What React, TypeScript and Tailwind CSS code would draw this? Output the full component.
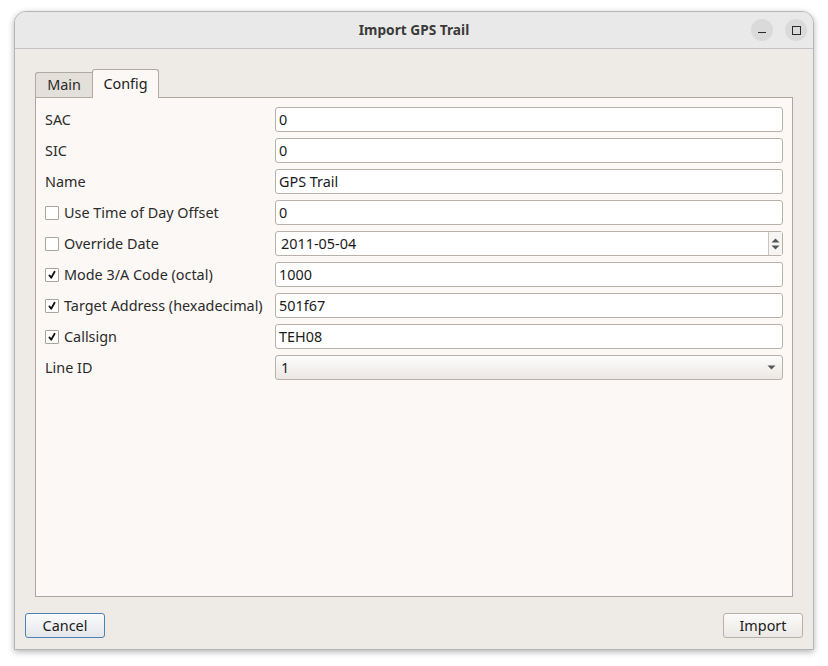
import React from "react";

const font = { fontFamily: '"Noto Sans", "Open Sans", sans-serif' };

function CheckBox({ checked }: { checked: boolean }) {
  return (
    <span className="w-[14px] h-[14px] border border-[#a9a49d] bg-white rounded-[1px] flex items-center justify-center shrink-0">
      {checked && (
        <svg width="10" height="10" viewBox="0 0 10 10">
          <path d="M2.4 5.4 L4.2 7.8 L7.6 1.8" stroke="#111" strokeWidth="1.8" fill="none" strokeLinecap="round" strokeLinejoin="round" />
        </svg>
      )}
    </span>
  );
}

function TextField({ value }: { value: string }) {
  return (
    <div className="h-[25px] border border-[#b7b1a9] rounded-[3px] bg-white flex items-center pl-[3px] text-[14.4px] text-[#1b1b1b]">
      {value}
    </div>
  );
}

function SpinField({ value }: { value: string }) {
  return (
    <div className="h-[25px] border border-[#b7b1a9] rounded-[3px] bg-white flex items-center text-[14.4px] text-[#1b1b1b]">
      <div className="flex-1 pl-[5px]">{value}</div>
      <div className="w-[14px] h-full border-l border-[#c9c4bd] bg-[#f6f5f3] flex flex-col items-center justify-center gap-[2px]">
        <svg width="9" height="5" viewBox="0 0 9 5"><path d="M0.5 4.5 L4.5 0.5 L8.5 4.5 Z" fill="#555" /></svg>
        <svg width="9" height="5" viewBox="0 0 9 5"><path d="M0.5 0.5 L4.5 4.5 L8.5 0.5 Z" fill="#555" /></svg>
      </div>
    </div>
  );
}

function ComboField({ value }: { value: string }) {
  return (
    <div className="h-[25px] border border-[#b7b1a9] rounded-[3px] bg-gradient-to-b from-[#fdfcfb] to-[#ebe8e4] flex items-center text-[14.4px] text-[#1b1b1b]">
      <div className="flex-1 pl-[5px]">{value}</div>
      <div className="w-[22px] flex items-center justify-center">
        <svg width="9" height="5" viewBox="0 0 9 5"><path d="M0.5 0.5 L4.5 4.5 L8.5 0.5 Z" fill="#555" /></svg>
      </div>
    </div>
  );
}

function Label({ text, check }: { text: string; check?: boolean | null }) {
  return (
    <div className="h-[25px] flex items-center gap-[5px] text-[14.4px] text-[#2b2b2b] whitespace-nowrap">
      {check !== undefined && check !== null && <CheckBox checked={check} />}
      <span>{text}</span>
    </div>
  );
}

export default function App() {
  return (
    <div className="w-[828px] h-[666px] bg-white pt-[11px] pl-[14px]" style={font}>
      <div className="w-[800px] h-[639px] rounded-t-[12px] border border-[#b5b5b5] bg-[#eeebe7] flex flex-col overflow-hidden shadow-[0_2px_6px_rgba(0,0,0,0.3)]">
        <div className="h-[37px] shrink-0 bg-[#e9e9e9] border-b border-[#c4c4c4] relative flex items-center justify-center">
          <span className="text-[13.7px] font-bold text-[#3a3a3a]">Import GPS Trail</span>
          <div className="absolute right-[6px] top-[7px] flex gap-[12px]">
            <div className="w-[22px] h-[22px] rounded-full bg-[#dadada] flex items-center justify-center">
              <div className="w-[8px] h-[1.5px] bg-[#2a2a2a] mt-[5px]" />
            </div>
            <div className="w-[22px] h-[22px] rounded-full bg-[#dadada] flex items-center justify-center">
              <div className="w-[9px] h-[9px] border-[1.5px] border-[#2a2a2a]" />
            </div>
          </div>
        </div>
        <div className="flex-1 flex flex-col px-[20px] pt-[20px]">
          <div className="h-[28px] flex items-end relative z-10">
            <div className="h-[26px] w-[57px] border border-[#b0aaa2] border-r-0 rounded-tl-[3px] bg-[#e3dfd9] flex items-center justify-center text-[14.4px] text-[#2b2b2b] mb-[-1px]">
              Main
            </div>
            <div className="h-[29px] w-[67px] border border-[#b0aaa2] border-b-0 rounded-t-[3px] bg-[#fbf8f5] flex items-center justify-center text-[14.4px] text-[#1b1b1b] mb-[-1px] pb-[1px]">
              Config
            </div>
          </div>
          <div className="h-[500px] border border-[#aca69e] bg-[#fbf8f5] px-[9px] pt-[9px]">
            <div className="grid grid-cols-[230px_1fr] gap-y-[6px]">
              <Label text="SAC" />
              <TextField value="0" />
              <Label text="SIC" />
              <TextField value="0" />
              <Label text="Name" />
              <TextField value="GPS Trail" />
              <Label text="Use Time of Day Offset" check={false} />
              <TextField value="0" />
              <Label text="Override Date" check={false} />
              <SpinField value="2011-05-04" />
              <Label text="Mode 3/A Code (octal)" check={true} />
              <TextField value="1000" />
              <Label text="Target Address (hexadecimal)" check={true} />
              <TextField value="501f67" />
              <Label text="Callsign" check={true} />
              <TextField value="TEH08" />
              <Label text="Line ID" />
              <ComboField value="1" />
            </div>
          </div>
          <div className="flex justify-between mt-[16px] mx-[-10px]">
            <button className="w-[80px] h-[25px] rounded-[3px] border border-[#4a84b5] bg-gradient-to-b from-[#fbfbfb] to-[#e3e6ea] text-[14.4px] text-[#1b1b1b]">
              Cancel
            </button>
            <button className="w-[80px] h-[25px] rounded-[3px] border border-[#b7b1a9] bg-gradient-to-b from-[#fbfbfb] to-[#ebe8e4] text-[14.4px] text-[#1b1b1b]">
              Import
            </button>
          </div>
        </div>
      </div>
    </div>
  );
}
